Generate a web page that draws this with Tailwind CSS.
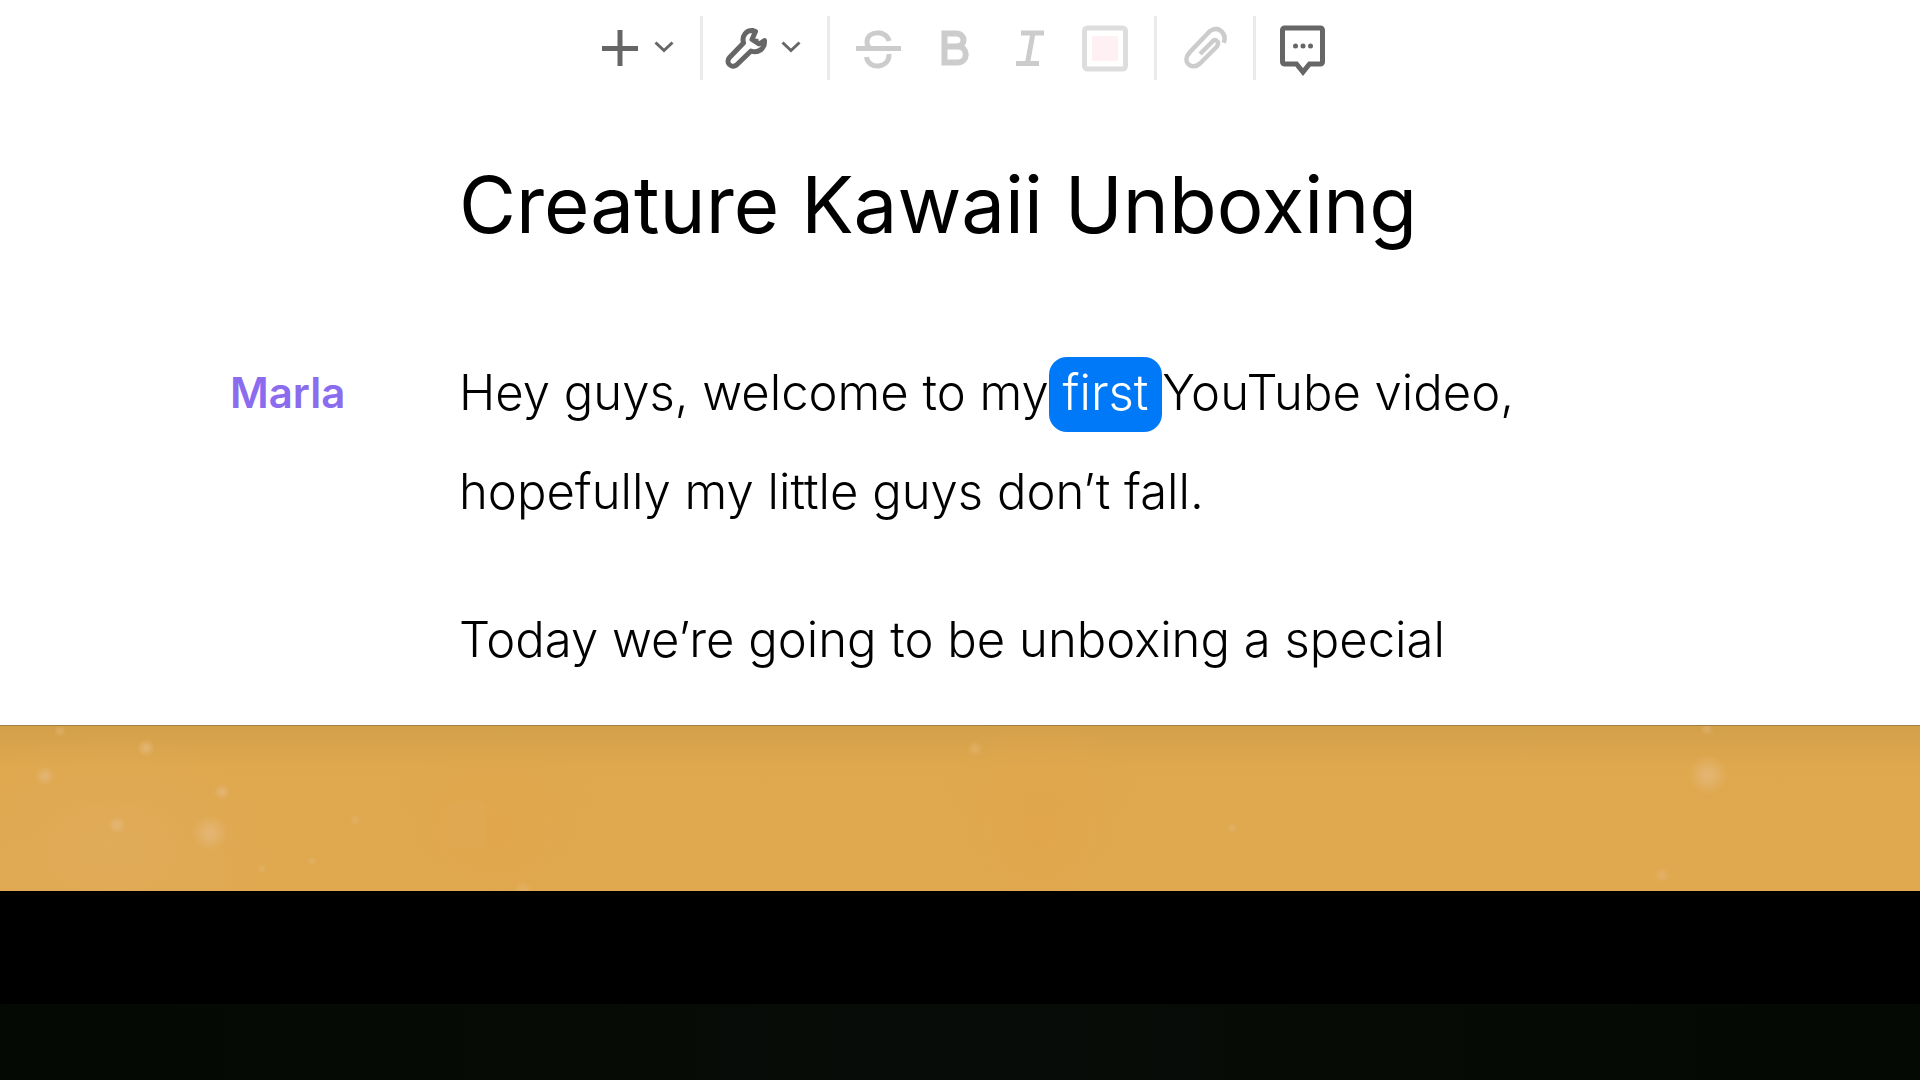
<!DOCTYPE html>
<html lang="en">
<head>
    <meta charset="UTF-8">
    <meta name="viewport" content="width=device-width, initial-scale=1.0">
    <title>Creature Kawaii Unboxing</title>
    <script src="https://cdn.jsdelivr.net/npm/@tailwindcss/browser@4"></script>
</head>
<body class="min-h-screen flex flex-col bg-black font-[Inter,sans-serif] text-black overflow-x-hidden">
    <main class="grow bg-white">
        <!-- Toolbar -->
        <div class="flex items-center justify-center pt-4 pl-[3px]" role="toolbar" aria-label="Formatting">
            <div class="flex items-center gap-1 pr-5 text-[#666666]">
                <button type="button" aria-label="Insert">
                    <svg class="size-12" viewBox="0 0 48 48" fill="none" stroke="currentColor" stroke-width="5"><path d="M24 6v36M6 24.500h36"/></svg>
                </button>
                <button type="button" aria-label="Insert options">
                    <svg class="size-8" viewBox="0 0 32 32" fill="none" stroke="currentColor" stroke-width="3"><path d="M7.500 10.500l8.500 8 8.500-8"/></svg>
                </button>
            </div>
            <div class="w-[3px] h-16 bg-[#ebebeb]"></div>
            <div class="flex items-center gap-1 px-5 text-[#666666]">
                <button type="button" aria-label="Tools">
                    <svg class="size-12" viewBox="0 0 48 48" fill="none" stroke="currentColor" stroke-width="5" stroke-linejoin="round"><path d="M30 6.500C23 6 18.500 12 20.500 19L6.500 33.500C2 38.500 8.500 45 13.500 41L28 27C35 29.500 42 25 41.500 16.500L36 20L29 15.500L32.500 7.500Z"/><path d="M27 14l8.500 1v7z" fill="currentColor" stroke="none"/></svg>
                </button>
                <button type="button" aria-label="Tool options">
                    <svg class="size-8" viewBox="0 0 32 32" fill="none" stroke="currentColor" stroke-width="3"><path d="M7.500 10.500l8.500 8 8.500-8"/></svg>
                </button>
            </div>
            <div class="w-[3px] h-16 bg-[#ebebeb]"></div>
            <div class="flex items-center gap-7 px-6 text-[#cccccc]">
                <button type="button" aria-label="Strikethrough">
                    <svg class="size-12" viewBox="0 0 48 48" fill="none" stroke="currentColor" stroke-width="5"><path d="M2 24.500h45"/><path d="M35 17C33 6 13 6 13 18c0 3 1 5 3 6M12.500 33C14 46 36 45 35 30"/></svg>
                </button>
                <button type="button" aria-label="Bold">
                    <svg class="size-12" viewBox="0 0 48 48" fill="none" stroke="currentColor" stroke-width="6"><path d="M14.500 9.500H26c10 0 10 13 0 13H14.500M26 22.500h1.500c11 0 11 16 0 16h-13M14.500 6.500v35"/></svg>
                </button>
                <button type="button" aria-label="Italic">
                    <svg class="size-12" viewBox="0 0 48 48" fill="none" stroke="currentColor" stroke-width="5"><path d="M15 9h23M10 39.500h23M27 9l-5.500 30"/></svg>
                </button>
                <button type="button" aria-label="Highlight color">
                    <svg class="size-12" viewBox="0 0 48 48" fill="none"><rect x="2.500" y="4" width="41" height="41" rx="3" stroke="#dddddd" stroke-width="5"/><rect x="10" y="12" width="26" height="25" rx="2" fill="#fff0f3"/></svg>
                </button>
            </div>
            <div class="w-[3px] h-16 bg-[#ebebeb]"></div>
            <div class="px-6 flex text-[#cccccc]">
                <button type="button" aria-label="Attach link">
                    <svg class="size-12" viewBox="0 0 48 48" fill="none" stroke="currentColor" stroke-width="4.500"><path d="M42.700 18.700C46 10 38 1 29 7L8.500 28.500C0 38 11 47 19 39.500L36 22.500C39 17 34 14 30.500 18.500L19 30"/></svg>
                </button>
            </div>
            <div class="w-[3px] h-16 bg-[#ebebeb]"></div>
            <div class="pl-6 flex text-[#666666]">
                <button type="button" aria-label="Comment">
                    <svg class="size-12 overflow-visible" viewBox="0 0 48 48"><path d="M4.500 4h36a2 2 0 0 1 2 2v32a2 2 0 0 1-2 2H29.500l-6.500 8-6.500-8h-12a2 2 0 0 1-2-2V6a2 2 0 0 1 2-2z" fill="none" stroke="currentColor" stroke-width="5"/><g fill="currentColor"><circle cx="15.500" cy="22" r="2.500"/><circle cx="23" cy="22" r="2.500"/><circle cx="30.500" cy="22" r="2.500"/></g></svg>
                </button>
            </div>
        </div>

        <!-- Script -->
        <article class="grid grid-cols-[229px_minmax(0,1080px)] pl-[230px] pt-[75px]">
            <h1 class="col-start-2 text-[78px] leading-[100px] [font-optical-sizing:none]">Creature Kawaii Unboxing</h1>
            <h2 class="row-start-2 mt-[88px] text-[42px] leading-[100px] font-semibold text-[#8b6cef] [font-optical-sizing:none]">Marla</h2>
            <div class="row-start-2 mt-[88px] flex flex-col gap-[49px] text-[49px] leading-[99px] font-light [font-optical-sizing:none]">
                <p>Hey guys, welcome to my<mark class="pt-[6px] pb-[10px] rounded-[18px] bg-[#0079f8] text-white whitespace-pre"> first </mark>YouTube video,<br>hopefully my little guys don’t fall.</p>
                <p>Today we’re going to be unboxing a special</p>
            </div>
        </article>
    </main>

    <!-- Video strip -->
    <div class="h-[166px] shrink-0 border-t border-[#a08040] bg-linear-to-b from-[#d3a04a] via-[#dfa84e] via-25% to-[#e0a950]">
        <svg class="w-full h-full" viewBox="0 0 1920 165" preserveAspectRatio="none">
            <defs>
                <radialGradient id="dust"><stop offset="0.200" stop-color="#e5b777" stop-opacity="0.800"/><stop offset="1" stop-color="#e5b777" stop-opacity="0"/></radialGradient>
                <radialGradient id="glow"><stop offset="0" stop-color="#e0ab5c" stop-opacity="0.800"/><stop offset="1" stop-color="#e0ab5c" stop-opacity="0"/></radialGradient>
                <radialGradient id="warm"><stop offset="0" stop-color="#e1a54a" stop-opacity="0.800"/><stop offset="1" stop-color="#e1a54a" stop-opacity="0"/></radialGradient>
            </defs>
            <ellipse cx="110" cy="120" rx="160" ry="110" fill="url(#glow)"/>
            <ellipse cx="495" cy="105" rx="110" ry="90" fill="url(#warm)"/>
            <ellipse cx="1040" cy="100" rx="100" ry="120" fill="url(#warm)"/>
            <rect x="447" y="75" width="40" height="48" rx="8" fill="#dfaa55" fill-opacity="0.600"/>
            <g fill="url(#dust)">
                <circle cx="210" cy="107" r="18"/>
                <circle cx="1708" cy="49" r="20"/>
                <circle cx="146" cy="22" r="9"/>
                <circle cx="45" cy="50" r="10"/>
                <circle cx="222" cy="66" r="8"/>
                <circle cx="117" cy="99" r="9"/>
            </g>
            <g fill="url(#dust)" opacity="0.600">
                <circle cx="262" cy="143" r="5"/>
                <circle cx="312" cy="135" r="5"/>
                <circle cx="355" cy="94" r="6"/>
                <circle cx="60" cy="5" r="6"/>
                <circle cx="975" cy="23" r="8"/>
                <circle cx="1232" cy="102" r="6"/>
                <circle cx="1662" cy="149" r="8"/>
                <circle cx="1707" cy="3" r="7"/>
                <circle cx="523" cy="164" r="9"/>
            </g>
        </svg>
    </div>
    <div class="h-[113px] shrink-0 bg-black"></div>
    <div class="h-[76px] shrink-0 bg-linear-to-r from-[#050904] via-[#070c08] to-[#050904]"></div>
</body>
</html>
